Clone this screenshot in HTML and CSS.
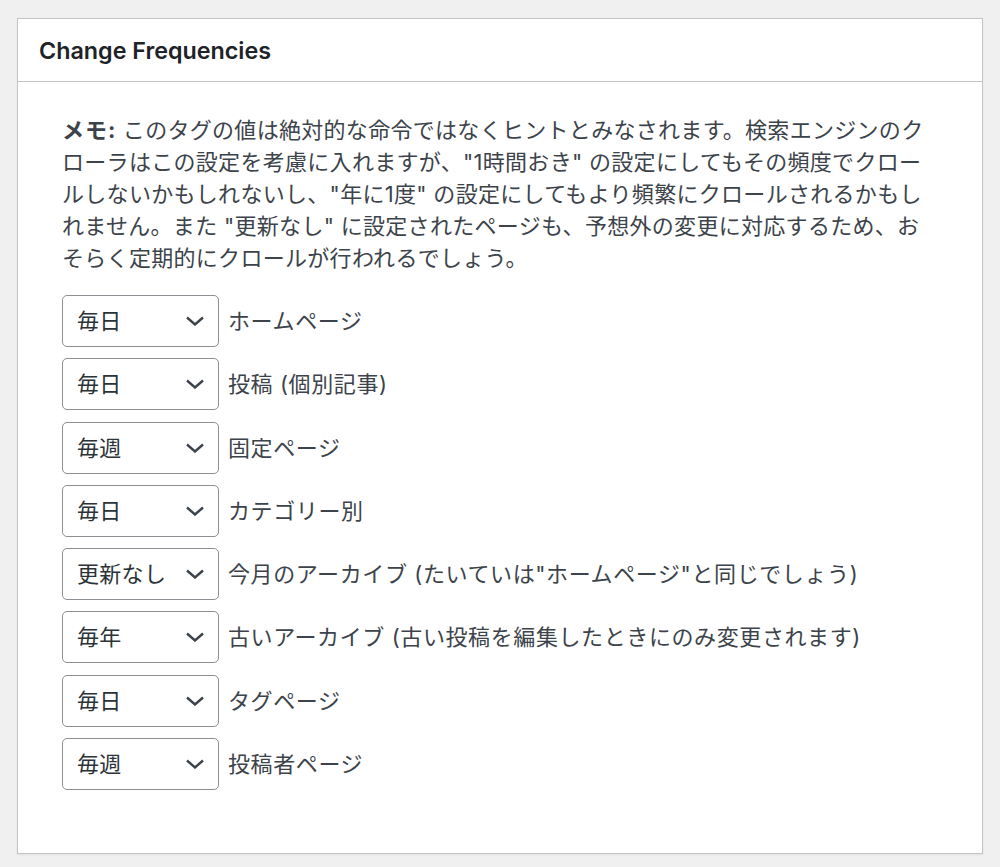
FILE: index.html
```html
<!DOCTYPE html>
<html lang="ja">
<head>
<meta charset="utf-8">
<title>Change Frequencies</title>
<link rel="stylesheet" href="styles.css">
</head>
<body>
<div class="postbox">
  <div class="postbox-header">
    <h2 class="hndle">Change Frequencies</h2>
  </div>
  <div class="inside">
    <p class="note"><b>メモ:</b> このタグの値は絶対的な命令ではなくヒントとみなされます。検索エンジンのク<br>ローラはこの設定を考慮に入れますが、"1時間おき" の設定にしてもその頻度でクロー<br>ルしないかもしれないし、"年に1度" の設定にしてもより頻繁にクロールされるかもし<br>れません。また "更新なし" に設定されたページも、予想外の変更に対応するため、お<br>そらく定期的にクロールが行われるでしょう。</p>
    <ul class="freq-list">
      <li class="freq-row">
        <span class="select-wrap">
          <select class="freq-select"><option>毎日</option></select>
          <svg class="chev" viewBox="0 0 20 10" width="20" height="10"><path d="M2 1.5 L10 8.5 L18 1.5"/></svg>
        </span>
        <label class="freq-label">ホームページ</label>
      </li>
      <li class="freq-row">
        <span class="select-wrap">
          <select class="freq-select"><option>毎日</option></select>
          <svg class="chev" viewBox="0 0 20 10" width="20" height="10"><path d="M2 1.5 L10 8.5 L18 1.5"/></svg>
        </span>
        <label class="freq-label">投稿 (個別記事)</label>
      </li>
      <li class="freq-row">
        <span class="select-wrap">
          <select class="freq-select"><option>毎週</option></select>
          <svg class="chev" viewBox="0 0 20 10" width="20" height="10"><path d="M2 1.5 L10 8.5 L18 1.5"/></svg>
        </span>
        <label class="freq-label">固定ページ</label>
      </li>
      <li class="freq-row">
        <span class="select-wrap">
          <select class="freq-select"><option>毎日</option></select>
          <svg class="chev" viewBox="0 0 20 10" width="20" height="10"><path d="M2 1.5 L10 8.5 L18 1.5"/></svg>
        </span>
        <label class="freq-label">カテゴリー別</label>
      </li>
      <li class="freq-row">
        <span class="select-wrap">
          <select class="freq-select"><option>更新なし</option></select>
          <svg class="chev" viewBox="0 0 20 10" width="20" height="10"><path d="M2 1.5 L10 8.5 L18 1.5"/></svg>
        </span>
        <label class="freq-label">今月のアーカイブ (たいていは"ホームページ"と同じでしょう)</label>
      </li>
      <li class="freq-row">
        <span class="select-wrap">
          <select class="freq-select"><option>毎年</option></select>
          <svg class="chev" viewBox="0 0 20 10" width="20" height="10"><path d="M2 1.5 L10 8.5 L18 1.5"/></svg>
        </span>
        <label class="freq-label">古いアーカイブ (古い投稿を編集したときにのみ変更されます)</label>
      </li>
      <li class="freq-row">
        <span class="select-wrap">
          <select class="freq-select"><option>毎日</option></select>
          <svg class="chev" viewBox="0 0 20 10" width="20" height="10"><path d="M2 1.5 L10 8.5 L18 1.5"/></svg>
        </span>
        <label class="freq-label">タグページ</label>
      </li>
      <li class="freq-row">
        <span class="select-wrap">
          <select class="freq-select"><option>毎週</option></select>
          <svg class="chev" viewBox="0 0 20 10" width="20" height="10"><path d="M2 1.5 L10 8.5 L18 1.5"/></svg>
        </span>
        <label class="freq-label">投稿者ページ</label>
      </li>
    </ul>
  </div>
</div>
</body>
</html>
```

FILE: styles.css
```css
* { box-sizing: border-box; }

html, body {
  margin: 0;
  background: #f0f0f1;
}

body {
  padding: 18px 17px 14px;
  font-family: "Inter", "Noto Sans CJK JP", sans-serif;
  color: #3c434a;
}

.postbox {
  width: 966px;
  height: 836px;
  background: #fff;
  border: 1px solid #c3c4c7;
  box-shadow: 0 1px 2px rgba(0, 0, 0, 0.06);
}

.postbox-header {
  height: 63px;
  border-bottom: 1px solid #c3c4c7;
  display: flex;
  align-items: center;
  padding: 0 21px;
}

.hndle {
  margin: 0;
  font-size: 23.3px;
  font-weight: 600;
  color: #1d2327;
}

.inside {
  padding: 32px 44px 0 44px;
}

.note {
  margin: 0;
  font-size: 22px;
  line-height: 32px;
  letter-spacing: 0.3px;
  white-space: nowrap;
}

.note b {
  font-weight: 700;
  color: #3c434a;
  letter-spacing: 1px;
}

.freq-list {
  list-style: none;
  margin: 21px 0 0;
  padding: 0;
  display: flex;
  flex-direction: column;
  gap: 11.25px;
}

.freq-row {
  display: flex;
  align-items: center;
  gap: 9px;
}

.select-wrap {
  position: relative;
  display: block;
  width: 157px;
  height: 52px;
}

.freq-select {
  appearance: none;
  -webkit-appearance: none;
  width: 100%;
  height: 100%;
  margin: 0;
  padding: 0 30px 0 14px;
  border: 1px solid #8c8f94;
  border-radius: 5px;
  background: #fff;
  font-family: "Inter", "Noto Sans CJK JP", sans-serif;
  font-size: 22px;
  letter-spacing: 0.3px;
  color: #2c3338;
}

.chev {
  position: absolute;
  right: 14px;
  top: 21px;
  fill: none;
  stroke: #3c434a;
  stroke-width: 2.4;
  pointer-events: none;
}

.freq-label {
  font-size: 22px;
  letter-spacing: 0.6px;
  color: #3c434a;
  line-height: 32px;
}
```
